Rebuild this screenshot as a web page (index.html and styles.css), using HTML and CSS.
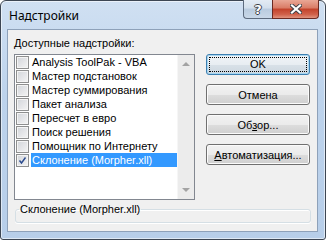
FILE: index.html
```html
<!DOCTYPE html>
<html lang="ru">
<head>
  <meta charset="UTF-8" />
  <title>Надстройки</title>
  <link rel="stylesheet" href="styles.css">
</head>
<body>
  <div class="window">
    <div class="titlebar">
      <span class="title">Надстройки</span>
      <div class="caption-buttons">
        <span class="cap-btn help">?</span>
        <span class="cap-btn close">
          <svg width="12" height="10" viewBox="0 0 12 10">
            <path d="M2 1.5 L10 8.5 M10 1.5 L2 8.5" stroke="#3b3f47" stroke-width="4" stroke-linecap="square"/>
            <path d="M2 1.5 L10 8.5 M10 1.5 L2 8.5" stroke="#fff" stroke-width="2.2" stroke-linecap="square"/>
          </svg>
        </span>
      </div>
    </div>

    <div class="client">
      <div class="main">
        <div class="addins">
          <div class="label"><u>Д</u>оступные надстройки:</div>
          <div class="listbox">
            <ul class="items">
              <li><span class="check"></span><span class="name">Analysis ToolPak - VBA</span></li>
              <li><span class="check"></span><span class="name">Мастер подстановок</span></li>
              <li><span class="check"></span><span class="name">Мастер суммирования</span></li>
              <li><span class="check"></span><span class="name">Пакет анализа</span></li>
              <li><span class="check"></span><span class="name">Пересчет в евро</span></li>
              <li><span class="check"></span><span class="name">Поиск решения</span></li>
              <li><span class="check"></span><span class="name">Помощник по Интернету</span></li>
              <li class="selected">
                <span class="check checked">
                  <svg width="9" height="9" viewBox="0 0 9 9">
                    <path d="M1.5 4.5 L3.5 7 L7.5 1.5" fill="none" stroke="#2a4a8e" stroke-width="1.4"/>
                  </svg>
                </span>
                <span class="name">Склонение (Morpher.xll)</span>
              </li>
            </ul>
            <div class="scrollbar">
              <span class="arrow up"></span>
              <span class="arrow down"></span>
            </div>
          </div>
        </div>

        <div class="buttons">
          <button class="btn default"><span class="focus">OK</span></button>
          <button class="btn">Отмена</button>
          <button class="btn">Об<u>з</u>ор...</button>
          <button class="btn"><u>А</u>втоматизация...</button>
        </div>
      </div>

      <fieldset class="status">
        <legend>Склонение (Morpher.xll)</legend>
      </fieldset>
    </div>
  </div>
</body>
</html>
```

FILE: styles.css
```css
* {
  box-sizing: border-box;
  margin: 0;
  padding: 0;
}

body {
  font-family: 'Liberation Sans', Arial, sans-serif;
  font-size: 11px;
  color: #000;
  background: #fff;
}

.window {
  width: 326px;
  height: 240px;
  border: 1px solid #3d4653;
  border-radius: 6px 6px 3px 3px;
  background: linear-gradient(#d0e0f2, #bdd3ec 40%, #b7cee9);
  box-shadow: inset 0 0 0 1px rgba(255, 255, 255, 0.55);
  display: flex;
  flex-direction: column;
}

/* title bar */
.titlebar {
  height: 28px;
  display: flex;
  align-items: flex-start;
  padding-left: 8px;
}

.title {
  font-family: 'Noto Sans', sans-serif;
  font-size: 12px;
  line-height: 16px;
  padding-top: 7px;
  color: #000;
}

.caption-buttons {
  margin-left: auto;
  margin-right: 6px;
  margin-top: -1px;
  display: flex;
}

.cap-btn {
  height: 19px;
  display: flex;
  align-items: center;
  justify-content: center;
  border: 1px solid #5d6b7e;
  border-top: none;
}

.help {
  width: 29px;
  border-radius: 0 0 0 4px;
  border-right: none;
  background: linear-gradient(#e3ebf4, #d3dfec 45%, #b9cbdf 50%, #c9d8e8);
  font-family: 'DejaVu Sans', sans-serif;
  font-weight: bold;
  font-size: 13px;
  color: #fff;
  text-shadow: 1px 0 #3b3f47, -1px 0 #3b3f47, 0 1px #3b3f47, 0 -1px #3b3f47;
}

.close {
  width: 47px;
  border-radius: 0 0 4px 0;
  border-color: #6b2a22;
  background: linear-gradient(#e9a796, #d97b65 45%, #c2412a 50%, #d0614a 80%, #e0937e);
}

/* client area */
.client {
  flex: 1;
  margin: 0 7px 7px 6px;
  border: 1px solid #8ea1b9;
  background: #f0f0f0;
}

.main {
  display: flex;
  padding: 7px 6px 0 6px;
}

.addins {
  width: 181px;
}

.label {
  line-height: 13px;
  height: 13px;
  margin-bottom: 4px;
}

.listbox {
  height: 146px;
  border: 1px solid #828790;
  background: #fff;
  display: flex;
}

.items {
  list-style: none;
  flex: 1;
}

.items li {
  height: 14px;
  display: flex;
  align-items: center;
}

.check {
  width: 13px;
  height: 13px;
  margin-left: 1px;
  margin-right: 2px;
  border: 1px solid #8e8f8f;
  background: linear-gradient(135deg, #d2d5da, #f4f4f4);
  box-shadow: inset 0 0 0 1px #f4f4f4;
  display: flex;
  align-items: center;
  justify-content: center;
}

.name {
  flex: 1;
  height: 14px;
  line-height: 14px;
  padding-left: 1px;
  white-space: nowrap;
}

.selected .name {
  background: #3399ff;
  color: #fff;
}

.scrollbar {
  width: 17px;
  background: #ececec;
  border-left: 1px solid #f6f6f6;
  display: flex;
  flex-direction: column;
  justify-content: space-between;
  align-items: center;
  padding: 7px 0 7px;
}

.arrow {
  width: 0;
  height: 0;
  border-left: 4px solid transparent;
  border-right: 4px solid transparent;
}

.arrow.up {
  border-bottom: 4px solid #a3a3a3;
}

.arrow.down {
  border-top: 4px solid #a3a3a3;
}

/* buttons */
.buttons {
  width: 104px;
  margin-left: 11px;
  margin-top: 17px;
  display: flex;
  flex-direction: column;
  gap: 9px;
}

.btn {
  height: 21px;
  font-family: inherit;
  font-size: 11px;
  color: #000;
  border: 1px solid #707070;
  border-radius: 3px;
  background: linear-gradient(#f2f2f2, #ebebeb 50%, #dddddd 51%, #cfcfcf);
  box-shadow: inset 0 0 0 1px #fbfbfb;
}

.btn.default {
  border-color: #3c7fb1;
  background: linear-gradient(#f1f4f7, #e8edf2 50%, #d9e1e8 51%, #cdd7e0);
  box-shadow: inset 0 0 0 1px #a8d6f0;
  padding: 2px;
}

.focus {
  display: block;
  height: 100%;
  line-height: 13px;
  border: 1px dotted #000;
}

/* status group */
.status {
  margin: 3px 6px 0 7px;
  border: 1px solid #d5dfe5;
  border-radius: 3px;
  padding: 0 0 6px 3px;
  box-shadow: 0 1px 0 #fff, inset 0 1px 0 #fff;
}

.status legend {
  line-height: 13px;
  padding: 0 1px;
}
```
